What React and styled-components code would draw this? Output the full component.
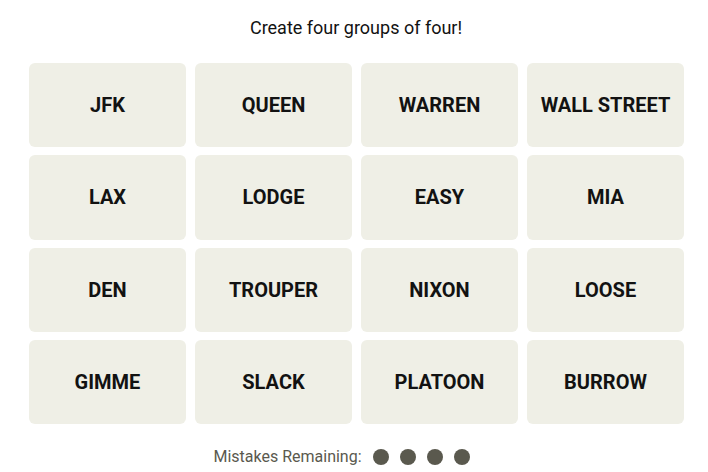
import * as React from "react";
import styled, { createGlobalStyle } from "styled-components";

const GlobalStyle = createGlobalStyle`
  body {
    margin: 0;
    background: #ffffff;
    font-family: Roboto, "Liberation Sans", sans-serif;
  }
`;

const Page = styled.main`
  width: 708px;
  height: 472px;
  display: flex;
  flex-direction: column;
  align-items: center;
  overflow: hidden;
`;

const Prompt = styled.p`
  margin: 16px 0 0;
  height: 24px;
  line-height: 24px;
  font-size: 18px;
  font-weight: 400;
  color: #121212;
  padding-left: 4px;
`;

const Board = styled.div`
  margin-top: 23px;
  display: grid;
  grid-template-columns: repeat(4, 157px);
  grid-auto-rows: 84.25px;
  gap: 8px 9px;
  padding-left: 5px;
`;

const Tile = styled.button`
  border: none;
  border-radius: 6px;
  background: #efefe6;
  color: #121212;
  font-family: Roboto, "Liberation Sans", sans-serif;
  font-size: 20px;
  font-weight: 700;
  text-transform: uppercase;
  display: flex;
  align-items: center;
  justify-content: center;
  padding: 0;
`;

const Mistakes = styled.div`
  margin-top: 24px;
  display: flex;
  align-items: center;
  gap: 11px;
  font-size: 16px;
  color: #5a594e;
  padding-right: 25px;
`;

const Label = styled.span`
  line-height: 18px;
`;

const Dot = styled.span`
  width: 16px;
  height: 16px;
  border-radius: 50%;
  background: #5a594e;
`;

const words = [
  "JFK", "QUEEN", "WARREN", "WALL STREET",
  "LAX", "LODGE", "EASY", "MIA",
  "DEN", "TROUPER", "NIXON", "LOOSE",
  "GIMME", "SLACK", "PLATOON", "BURROW",
];

const App = () => (
  <>
    <GlobalStyle />
    <Page>
      <Prompt>Create four groups of four!</Prompt>
      <Board>
        {words.map((w) => (
          <Tile key={w}>{w}</Tile>
        ))}
      </Board>
      <Mistakes>
        <Label>Mistakes Remaining:</Label>
        {[0, 1, 2, 3].map((i) => (
          <Dot key={i} />
        ))}
      </Mistakes>
    </Page>
  </>
);

export default App;
